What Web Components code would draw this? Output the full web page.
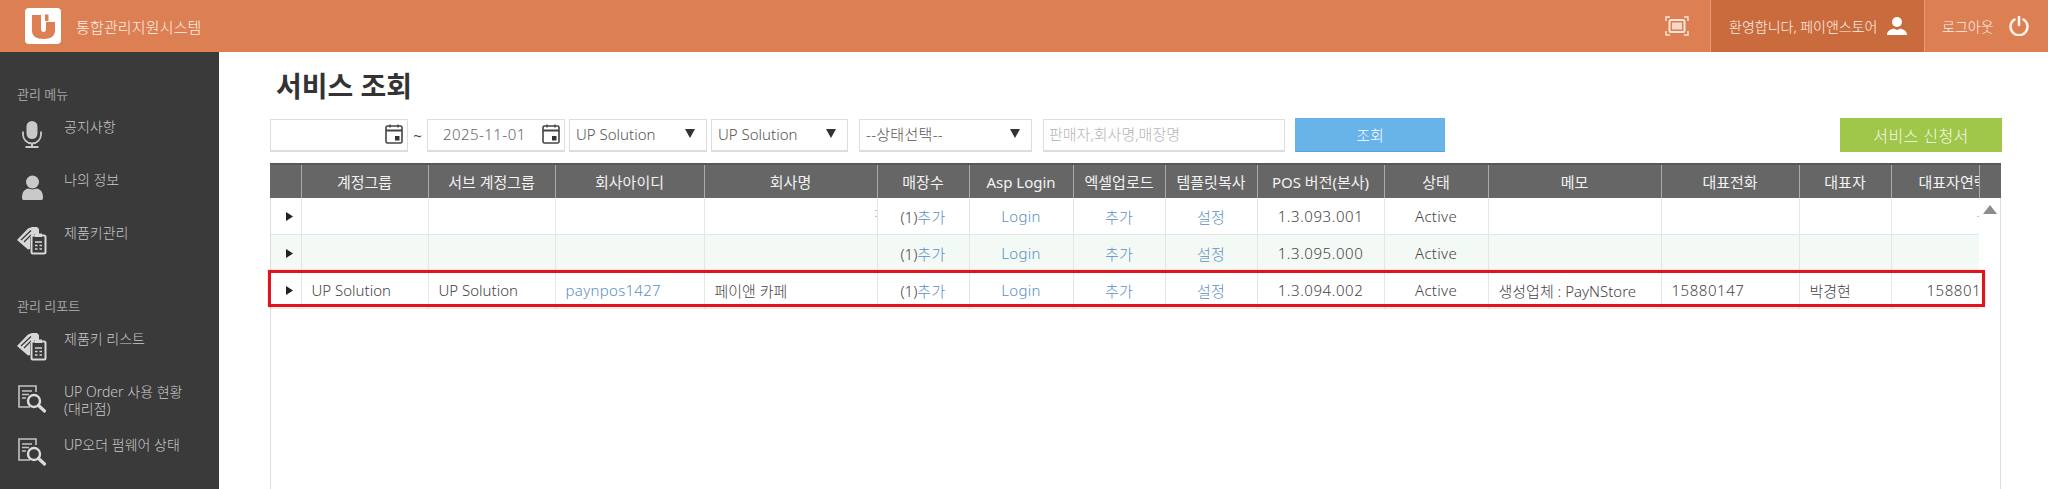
<!DOCTYPE html>
<html lang="ko">
<head>
<meta charset="utf-8">
<title>서비스 조회</title>
<style>
  html, body { margin: 0; height: 100%; overflow: hidden; background: #fff; }
  body { font-family: "Noto Sans", "Noto Sans CJK KR", sans-serif; font-weight: 300; color: #444; }
</style>
</head>
<body>
<ums-app>
  <top-bar slot="top" title-text="통합관리지원시스템" user="환영합니다, 페이앤스토어"></top-bar>
  <side-nav slot="side">
    <nav-section label="관리 메뉴">
      <nav-item icon="mic">공지사항</nav-item>
      <nav-item icon="user">나의 정보</nav-item>
      <nav-item icon="key">제품키관리</nav-item>
    </nav-section>
    <nav-section label="관리 리포트">
      <nav-item icon="key">제품키 리스트</nav-item>
      <nav-item icon="search">UP Order 사용 현황<br>(대리점)</nav-item>
      <nav-item icon="search">UP오더 펌웨어 상태</nav-item>
    </nav-section>
  </side-nav>
  <service-page slot="main"></service-page>
</ums-app>

<script>
const ICONS = {
  mic: `<svg width="30" height="30" viewBox="0 0 30 30"><rect x="9.500" y="2" width="11" height="18" rx="5.500" fill="#c9c9c9"/><path d="M6 12.500v3a9 9 0 0 0 18 0v-3" fill="none" stroke="#c9c9c9" stroke-width="1.800"/><path d="M15 24v3.500M8.500 28h13" stroke="#c9c9c9" stroke-width="2"/></svg>`,
  user: `<svg width="30" height="30" viewBox="0 0 30 30"><circle cx="15.500" cy="10" r="6.500" fill="#c9c9c9"/><path d="M5 26c0-6 2-8 6-9.500l4.500 1 4.500-1c4 1.500 6 3.500 6 9.500 0 1.500-1 2-2 2H7c-1 0-2-.5-2-2z" fill="#c9c9c9"/></svg>`,
  key: `<svg width="30" height="30" viewBox="0 0 30 30"><path d="M0 15 11 3.500 15 2h5l2 2v5h-5v3h-4v12l-2 .5z" fill="#d8d8d8"/><path d="M4 15 14 5.500M7 17l7-7" stroke="#3a3a3a" stroke-width="1.300"/><rect x="14.500" y="10.500" width="14" height="18" rx="1.500" fill="#3a3a3a" stroke="#d8d8d8" stroke-width="2"/><rect x="18" y="8.500" width="7" height="3.500" fill="#d8d8d8"/><path d="M18 17h7M18 20.500h2.500M22.500 20.500H25M18 24h2.500M22.500 24H25" stroke="#d8d8d8" stroke-width="1.600"/></svg>`,
  search: `<svg width="30" height="30" viewBox="0 0 30 30"><path d="M13 23H2V2h17v6" fill="none" stroke="#c4c4c4" stroke-width="1.600"/><path d="M5 7h10M5 10.500h7M5 14h4" stroke="#c4c4c4" stroke-width="1.600"/><circle cx="17" cy="17" r="6" fill="none" stroke="#dcdcdc" stroke-width="2.400"/><path d="m21.500 21.500 6 5.500" stroke="#dcdcdc" stroke-width="3.200" stroke-linecap="round"/></svg>`,
};

class UmsApp extends HTMLElement {
  constructor() {
    super();
    this.attachShadow({ mode: 'open' });
    this.shadowRoot.innerHTML = `
      <style>
        :host { display: flex; flex-direction: column; height: 100vh; }
        .body { flex: 1; display: flex; min-height: 0; }
      </style>
      <slot name="top"></slot>
      <div class="body">
        <slot name="side"></slot>
        <slot name="main"></slot>
      </div>`;
  }
}

class TopBar extends HTMLElement {
  constructor() {
    super();
    this.attachShadow({ mode: 'open' });
  }

  connectedCallback() {
    this.shadowRoot.innerHTML = `
      <style>
        :host { display: flex; align-items: stretch; height: 52px; background: #dc7f53; color: #fdf1ea; font-size: 14px; flex: none; }
        .logo { display: flex; align-items: center; margin-left: 25px; }
        .name { display: flex; align-items: center; margin-left: 15px; font-size: 15px; letter-spacing: .15px; flex: 1; }
        .full { display: flex; align-items: center; justify-content: center; width: 66px; }
        .user { display: flex; align-items: center; width: 215px; box-sizing: border-box; padding-left: 18px; gap: 10px; background: #c96b3c; border-left: 1px solid #e59c78; border-right: 1px solid #e59c78; }
        .out { display: flex; align-items: center; width: 123px; box-sizing: border-box; padding-left: 17px; gap: 15px; }
      </style>
      <div class="logo">
        <svg width="36" height="36" viewBox="0 0 36 36"><rect width="36" height="36" rx="4" fill="#fff"/><path d="M7 7h9v13.500c0 2.500 1 3.500 2.500 3.500s2.500-1 2.500-3.500V14h9v9c0 5-4.500 8-11.500 8S7 28 7 23z" fill="#dc7f53"/><path d="M20 6.500h3.500V13H20z" fill="#dc7f53"/></svg>
      </div>
      <div class="name">${this.getAttribute('title-text')}</div>
      <div class="full">
        <svg width="24" height="20" viewBox="0 0 24 20" fill="none" stroke="#fbe6da" stroke-width="1.400"><path d="M1 5V1h4M19 1h4v4M23 15v4h-4M5 19H1v-4"/><rect x="4.500" y="4" width="15" height="12" rx="1.500" stroke-width="2"/><rect x="7" y="6.500" width="10" height="7" fill="#fbe6da" stroke="none" opacity=".85"/></svg>
      </div>
      <div class="user">
        <span>${this.getAttribute('user')}</span>
        <svg width="20" height="20" viewBox="0 0 20 20"><circle cx="10" cy="6" r="5" fill="#fff"/><path d="M0 19c0-4 3-5.500 6.500-6.500L10 14l3.500-1.500C17 13.500 20 15 20 19z" fill="#fff"/></svg>
      </div>
      <div class="out">
        <span>로그아웃</span>
        <svg width="20" height="20" viewBox="0 0 20 20" fill="none" stroke="#fdf1ea" stroke-width="2.600" stroke-linecap="round"><path d="M5.500 3.500a8.500 8.500 0 1 0 9 0"/><path d="M10 1v8"/></svg>
      </div>`;
  }
}

class SideNav extends HTMLElement {
  constructor() {
    super();
    this.attachShadow({ mode: 'open' });
    this.shadowRoot.innerHTML = `
      <style>
        :host { display: flex; flex-direction: column; flex: none; width: 219px; background: #3a3a3a; padding-top: 34px; box-sizing: border-box; }
      </style>
      <slot></slot>`;
  }
}

class NavSection extends HTMLElement {
  constructor() {
    super();
    this.attachShadow({ mode: 'open' });
  }

  connectedCallback() {
    this.shadowRoot.innerHTML = `
      <style>
        :host { display: block; margin-bottom: 21px; }
        h4 { margin: 0 0 15px 17px; font-size: 13px; line-height: 17px; font-weight: 400; color: #a0a0a0; }
      </style>
      <h4>${this.getAttribute('label')}</h4>
      <slot></slot>`;
  }
}

class NavItem extends HTMLElement {
  constructor() {
    super();
    this.attachShadow({ mode: 'open' });
  }

  connectedCallback() {
    this.shadowRoot.innerHTML = `
      <style>
        :host { display: flex; height: 53px; padding-left: 17px; font-size: 14px; line-height: 17px; color: #c9c9c9; }
        .icon { flex: none; width: 30px; height: 30px; margin: 1px 17px 0 0; }
      </style>
      <div class="icon">${ICONS[this.getAttribute('icon')]}</div>
      <div><slot></slot></div>`;
  }
}

class FilterField extends HTMLElement {
  constructor() {
    super();
    this.attachShadow({ mode: 'open' });
  }

  connectedCallback() {
    const type = this.getAttribute('type');
    const w = this.getAttribute('w');
    let tail = '';
    if (type === 'date') {
      tail = `<svg width="18" height="20" viewBox="0 0 18 20"><rect x="1" y="2" width="16" height="17" rx="1.500" fill="#fff" stroke="#444" stroke-width="1.600"/><path d="M1 6.500h16" stroke="#444" stroke-width="2"/><path d="M5 .5v3M13 .5v3" stroke="#444" stroke-width="1.400"/><rect x="10" y="12" width="4.500" height="4.500" fill="#333"/></svg>`;
    } else if (type === 'select') {
      tail = `<svg width="10" height="9" viewBox="0 0 10 9"><path d="M0 0h10L5 9z" fill="#333"/></svg>`;
    }
    this.shadowRoot.innerHTML = `
      <style>
        :host { display: flex; align-items: center; justify-content: space-between; box-sizing: border-box; flex: none; width: ${w}px; height: 33px; border: 1px solid #ddd; border-bottom-width: 2px; background: #fff; font-size: 15px; color: #555; padding: 0 ${type === 'date' ? 4 : 11}px 2px ${type === 'date' ? 15 : 6}px; white-space: nowrap; }
        :host([type=date]) { color: #666; letter-spacing: .45px; }
        :host(.wide) { letter-spacing: .3px; }
        :host([placeholder]) { color: #b5b5b5; font-size: 15px; padding-left: 5px; }
      </style>
      <span><slot></slot></span>${tail}`;
  }
}

class FilterBar extends HTMLElement {
  constructor() {
    super();
    this.attachShadow({ mode: 'open' });
    this.shadowRoot.innerHTML = `
      <style>
        :host { display: flex; align-items: center; height: 34px; }
        .til { width: 19px; flex: none; text-align: center; font-size: 15px; font-weight: 400; color: #444; }
        .btn { flex: none; display: flex; align-items: center; justify-content: center; height: 34px; color: #fff; font-size: 15px; box-sizing: border-box; }
        .go { width: 150px; background: #68b3e8; margin-left: 10px; border-bottom: 1px solid #5aa3d6; }
        .apply { width: 162px; background: #a0c64a; margin-left: auto; font-size: 16px; letter-spacing: .4px; color: #f5fae8; }
        filter-field + filter-field { margin-left: 4px; }
        .wide { margin-left: 11px !important; }
        .next { margin-left: 11px !important; }
      </style>
      <filter-field type="date" w="138"></filter-field>
      <div class="til">~</div>
      <filter-field type="date" w="138">2025-11-01</filter-field>
      <filter-field type="select" w="138">UP Solution</filter-field>
      <filter-field type="select" w="137">UP Solution</filter-field>
      <filter-field class="wide" type="select" w="173">--상태선택--</filter-field>
      <filter-field class="next" type="text" w="242" placeholder>판매자,회사명,매장명</filter-field>
      <div class="btn go">조회</div>
      <div class="btn apply">서비스 신청서</div>`;
  }
}

const COLS = [30, 127, 127, 149, 173, 92, 104, 92, 92, 127, 104, 173, 138, 92, 88];
const HEADS = ['', '계정그룹', '서브 계정그룹', '회사아이디', '회사명', '매장수', 'Asp Login', '엑셀업로드', '템플릿복사', 'POS 버전(본사)', '상태', '메모', '대표전화', '대표자', '대표자연락처'];

class DataGrid extends HTMLElement {
  constructor() {
    super();
    this.attachShadow({ mode: 'open' });
  }

  row(ver, extra, cls) {
    const e = extra || {};
    const link = (t) => `<td class="c"><a>${t}</a></td>`;
    return `<tr class="${cls}">
      <td class="c arrow"><svg width="7" height="9" viewBox="0 0 7 9"><path d="M0 0l7 4.500L0 9z" fill="#222"/></svg></td>
      <td>${e.group || ''}</td><td>${e.sub || ''}</td><td>${e.id ? `<a>${e.id}</a>` : ''}</td>
      <td class="clip">${e.name || ''}${e.stray ? '<i>:</i>' : ''}</td>
      <td class="c">(1)<a>추가</a></td>${link('Login')}${link('추가')}${link('설정')}
      <td class="c num">${ver}</td><td class="c wide">Active</td><td>${e.memo || ''}</td><td class="num">${e.tel || ''}</td><td>${e.ceo || ''}</td>
      <td class="last num clip">${e.mobile || ''}${e.stray ? '<i>.</i>' : ''}</td></tr>`;
  }

  connectedCallback() {
    const colgroup = `<colgroup>${COLS.map((w) => `<col style="width:${w}px">`).join('')}</colgroup>`;
    const heads = HEADS.map((h, i) => `<th${i === 14 ? ' class="clip-head"' : ''}>${h}</th>`).join('');
    this.shadowRoot.innerHTML = `
      <style>
        :host { display: flex; flex-direction: column; flex: 1; min-height: 0; width: 1731px; border-right: 1px solid #ddd; border-left: 1px solid #ddd; box-sizing: border-box; margin-right: 1px; font-size: 15px; color: #444; }
        table { border-collapse: collapse; table-layout: fixed; width: 1708px; }
        .head { display: flex; background: #666; margin: 0 -1px; height: 35px; border-top: 2px solid #585858; box-sizing: border-box; }
        .head table { margin-left: 1px; }
        .head .gutter { flex: 1; border-left: 1px solid #aaa; }
        th { height: 33px; padding: 0; font-weight: 400; color: #f2f2f2; border-left: 1px solid #a9a9a9; overflow: hidden; white-space: nowrap; }
        th:first-child { border-left: 0; }
        th.clip-head { text-align: left; padding-left: 27px; }
        .body { display: flex; }
        td { height: 36px; padding: 0 0 0 10px; border: 1px solid #e6e6e6; border-top: 0; white-space: nowrap; overflow: hidden; }
        td:first-child { border-left: 0; }
        td:last-child { border-right: 0; }
        td.c { text-align: center; padding: 0; }
        td.num { letter-spacing: .55px; }
        td.wide { letter-spacing: .3px; }
        td.last { padding-left: 35px; }
        td.clip { position: relative; }
        td i { position: absolute; right: -1px; top: 6px; font-style: normal; font-size: 12px; color: #777; }
        tr.alt td { background: #f3faf6; }
        a { color: #5c8fc4; text-decoration: none; letter-spacing: .3px; }
        .arrow svg { display: block; margin: 1px auto 0 15px; }
        .bar { flex: 1; display: flex; justify-content: center; padding-top: 7px; }
        .wrap { position: relative; }
        .mark { position: absolute; left: -3px; top: 72px; width: 1717px; height: 37px; box-sizing: border-box; border: 3px solid #e0141e; box-shadow: 0 0 1px #f2808a; pointer-events: none; }
      </style>
      <div class="head"><table>${colgroup}<tr>${heads}</tr></table><div class="gutter"></div></div>
      <div class="body">
        <div class="wrap">
          <table>${colgroup}
            ${this.row('1.3.093.001', { stray: true }, '')}
            ${this.row('1.3.095.000', {}, 'alt')}
            ${this.row('1.3.094.002', { group: 'UP Solution', sub: 'UP Solution', id: 'paynpos1427', name: '페이앤 카페', memo: '생성업체 : PayNStore', tel: '15880147', ceo: '박경현', mobile: '158801' }, 'hit')}
          </table>
          <div class="mark"></div>
        </div>
        <div class="bar"><svg width="14" height="9" viewBox="0 0 14 9"><path d="M7 0l7 9H0z" fill="#8c8c8c"/></svg></div>
      </div>`;
  }
}

class ServicePage extends HTMLElement {
  constructor() {
    super();
    this.attachShadow({ mode: 'open' });
    this.shadowRoot.innerHTML = `
      <style>
        :host { display: flex; flex-direction: column; flex: 1; min-width: 0; padding: 0 46px 0 51px; }
        h1 { margin: 14px 0 12px 6px; font-size: 28px; line-height: 40px; font-weight: 700; color: #333; }
        filter-bar { margin-bottom: 11px; }
      </style>
      <h1>서비스 조회</h1>
      <filter-bar></filter-bar>
      <data-grid></data-grid>`;
  }
}

customElements.define('filter-field', FilterField);
customElements.define('filter-bar', FilterBar);
customElements.define('data-grid', DataGrid);
customElements.define('ums-app', UmsApp);
customElements.define('top-bar', TopBar);
customElements.define('side-nav', SideNav);
customElements.define('nav-section', NavSection);
customElements.define('nav-item', NavItem);
customElements.define('service-page', ServicePage);
</script>
</body>
</html>
